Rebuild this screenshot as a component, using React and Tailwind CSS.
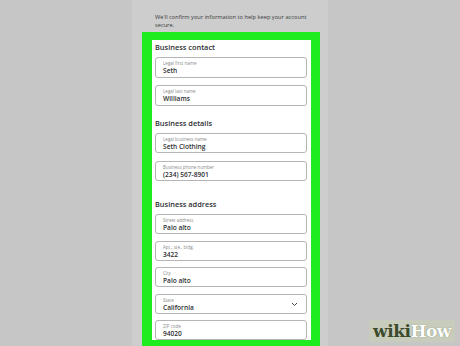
import React from "react";

const Field = ({ label, value, select, className = "" }) => (
  <div className={`relative h-[20px] rounded-[3px] border border-[#b5b5b5] bg-white pl-[7px] pt-[2px] ${className}`}>
    <div className="text-[4.5px] leading-[6px] text-[#8a8a8a]">{label}</div>
    <div className="text-[6.6px] leading-[9px] font-semibold text-[#2c2e2f]">{value}</div>
    {select && (
      <svg className="absolute right-[8px] top-[7px]" width="7" height="5" viewBox="0 0 7 5">
        <path d="M1 1 L3.5 3.5 L6 1" fill="none" stroke="#444" strokeWidth="1" />
      </svg>
    )}
  </div>
);

const Heading = ({ children, className = "" }) => (
  <div className={`h-[12px] text-[7.4px] leading-[12px] font-semibold text-[#2c2e2f] ${className}`}>{children}</div>
);

export default function App() {
  return (
    <div className="relative flex h-[346px] w-[460px] overflow-hidden bg-[#c6c6c6] font-['Open_Sans',sans-serif]">
      <div className="ml-[132px] flex w-[196px] flex-col bg-[#cdcdcd]">
        <p className="ml-[23px] mt-[13px] w-[160px] text-[5.7px] leading-[8px] text-[#3a3a3a]">
          We'll confirm your information to help keep your account secure.
        </p>
        <div className="ml-[10px] mt-[3px] w-[178px] flex-1 bg-[#1fec1f] pl-[10px] pr-[9px] pt-[8px] pb-[7px]">
          <div className="flex h-full flex-col overflow-hidden bg-white pl-[3px] pr-[4px]">
            <Heading className="mt-[1px] mb-[4px]">Business contact</Heading>
            <div className="flex flex-col gap-[7px]">
              <Field className="h-[21px]" label="Legal first name" value="Seth" />
              <Field className="h-[21px]" label="Legal last name" value="Williams" />
            </div>
            <Heading className="mt-[11px] mb-[4px]">Business details</Heading>
            <div className="flex flex-col gap-[8px]">
              <Field label="Legal business name" value="Seth Clothing" />
              <Field label="Business phone number" value="(234) 567-8901" />
            </div>
            <Heading className="mt-[17px] mb-[4px]">Business address</Heading>
            <div className="flex flex-col gap-[6.5px]">
              <Field label="Street address" value="Palo alto" />
              <Field label="Apt., ste., bldg." value="3422" />
              <Field label="City" value="Palo alto" />
              <Field label="State" value="California" select />
              <Field label="ZIP code" value="94020" />
            </div>
          </div>
        </div>
      </div>
      <div className="absolute right-[5px] bottom-[4px] flex items-baseline rounded-[3px] bg-[#c9d1b8]/60 px-[4px] text-[17px] font-bold leading-[22px] font-['DejaVu_Serif',serif] tracking-[-0.5px]">
        <span className="text-[#3b4a2b]">wiki</span>
        <span className="text-white [text-shadow:0_0_1px_#6b7a55]">How</span>
      </div>
    </div>
  );
}
